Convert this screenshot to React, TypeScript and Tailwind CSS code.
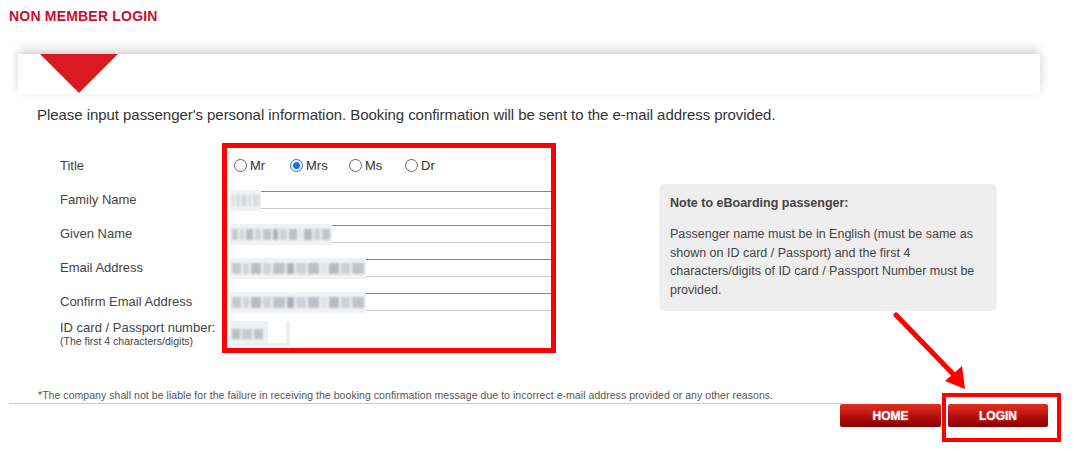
import React from "react";

function Blur({ w }: { w: string }) {
  return (
    <div className={`absolute left-0 top-[-2px] h-[21px] ${w} overflow-hidden bg-[#f1f2f3]`}>
      <div className="flex h-full items-center gap-[2px] px-[2px] blur-[1.3px]">
        <span className="h-[11px] w-[10px] bg-[#c6c9cd]" />
        <span className="h-[11px] w-[7px] bg-[#d3d6d9]" />
        <span className="h-[11px] w-[12px] bg-[#b9bdc2]" />
        <span className="h-[11px] w-[9px] bg-[#d0d3d6]" />
        <span className="h-[11px] w-[14px] bg-[#bfc3c7]" />
        <span className="h-[11px] w-[8px] bg-[#aeb2b7]" />
        <span className="h-[11px] w-[11px] bg-[#cfd2d5]" />
        <span className="h-[11px] w-[13px] bg-[#bcc0c4]" />
        <span className="h-[11px] w-[6px] bg-[#e2e4e6]" />
        <span className="h-[11px] w-[12px] bg-[#b7bbc0]" />
        <span className="h-[11px] w-[10px] bg-[#ccd0d3]" />
        <span className="h-[11px] w-[14px] bg-[#c0c4c8]" />
      </div>
    </div>
  );
}

function Field({ w }: { w: string }) {
  return (
    <div className="flex h-[34px] items-center pl-[3px]">
      <div className="relative h-[18px] w-full border-t border-b border-t-[#7d8894] border-b-[#c5cacf]">
        <Blur w={w} />
      </div>
    </div>
  );
}

function Radio({ label, checked, w }: { label: string; checked?: boolean; w: string }) {
  return (
    <label className={`flex items-center gap-[3px] ${w}`}>
      {checked ? (
        <span className="flex h-[13px] w-[13px] items-center justify-center rounded-full border border-[#1a73e8]">
          <span className="h-[7px] w-[7px] rounded-full bg-[#1a73e8]" />
        </span>
      ) : (
        <span className="h-[13px] w-[13px] rounded-full border border-[#666]" />
      )}
      <span className="text-[13px] text-[#333]">{label}</span>
    </label>
  );
}

export default function App() {
  return (
    <div className="relative h-[455px] w-[1079px] overflow-hidden bg-white font-['Liberation_Sans',Arial,sans-serif]">
      <h1 className="pl-[9px] pt-[8px] text-[14px] font-bold leading-[17px] tracking-[0.2px] text-[#c8102e]">
        NON MEMBER LOGIN
      </h1>

      {/* card header strip */}
      <div className="ml-[18px] mt-[29px] h-[40px] w-[1022px] bg-white shadow-[0_-6px_9px_rgba(0,0,0,0.12),4px_0_6px_rgba(0,0,0,0.04),-4px_0_6px_rgba(0,0,0,0.04)]">
        <svg width="80" height="40" className="ml-[22px]">
          <polygon points="0,0 78,0 39,39" fill="#da1a23" />
        </svg>
      </div>

      <p className="ml-[37px] mt-[12px] text-[15px] leading-[18px] tracking-[-0.05px] text-[#333]">
        Please input passenger's personal information. Booking confirmation will be sent to the e-mail address provided.
      </p>

      <div className="mt-[19px] flex">
        <div className="w-[162px] ml-[60px] pt-[5px] text-[13px] text-[#444]">
          <div className="flex h-[35px] items-center">Title</div>
          <div className="flex h-[34px] items-center">Family Name</div>
          <div className="flex h-[34px] items-center">Given Name</div>
          <div className="flex h-[34px] items-center">Email Address</div>
          <div className="flex h-[34px] items-center">Confirm Email Address</div>
          <div className="flex h-[29px] flex-col justify-center leading-[14px]">
            <span>ID card / Passport number:</span>
            <span className="text-[10.5px] leading-[12px]">(The first 4 characters/digits)</span>
          </div>
        </div>

        <div className="w-[334px] border-[5px] border-[#ff0000]">
          <div className="flex h-[35px] items-center pl-[7px]">
            <Radio label="Mr" w="w-[56px]" />
            <Radio label="Mrs" checked w="w-[59px]" />
            <Radio label="Ms" w="w-[56px]" />
            <Radio label="Dr" w="w-[40px]" />
          </div>
          <Field w="w-[31px]" />
          <Field w="w-[102px]" />
          <Field w="w-[136px]" />
          <Field w="w-[136px]" />
          <div className="flex h-[29px] items-center pl-[3px]">
            <div className="relative h-[25px] w-[60px] bg-white">
              <div className="absolute left-0 top-0 h-[25px] w-[38px] bg-[#eef0f1]">
                <div className="flex h-full items-center gap-[2px] px-[2px] blur-[1.3px]">
                  <span className="h-[10px] w-[8px] bg-[#b9bdc1]" />
                  <span className="h-[10px] w-[10px] bg-[#c8cbcf]" />
                  <span className="h-[10px] w-[9px] bg-[#bdc1c5]" />
                </div>
              </div>
              <div className="absolute right-0 top-0 h-[25px] w-[4px] bg-[#eef0f1]" />
              <div className="absolute bottom-0 left-0 h-[3px] w-[60px] bg-[#eef0f1]" />
            </div>
          </div>
        </div>

        <div className="ml-[103px] mt-[41px] h-[127px] w-[338px] rounded-[6px] bg-[#eeeeee] px-[11px] pt-[11px] text-[12.5px] text-[#444]">
          <p className="font-bold leading-[16px]">Note to eBoarding passenger:</p>
          <p className="mt-[14px] leading-[18.5px]">
            Passenger name must be in English (must be same as shown on ID card / Passport) and the first 4 characters/digits of ID card / Passport Number must be provided.
          </p>
        </div>
      </div>

      <div className="ml-[9px] mt-[35px] h-[16px] w-[833px] whitespace-nowrap border-b border-[#ebbcbc] pl-[29px] text-[10.5px] leading-[14px] tracking-[0.05px] text-[#555]">
        *The company shall not be liable for the failure in receiving the booking confirmation message due to incorrect e-mail address provided or any other reasons.
      </div>

      <div className="flex justify-end gap-[7px] pr-[31px]">
        <button className="h-[23px] w-[101px] rounded-[2px] bg-gradient-to-b from-[#e0301e] via-[#b81010] to-[#8c0000] text-[12px] font-bold text-white [text-shadow:0_0_2px_rgba(255,255,255,0.6)]">
          HOME
        </button>
        <button className="h-[23px] w-[100px] rounded-[2px] bg-gradient-to-b from-[#e0301e] via-[#b81010] to-[#8c0000] text-[12px] font-bold text-white [text-shadow:0_0_2px_rgba(255,255,255,0.6)]">
          LOGIN
        </button>
      </div>

      {/* annotations */}
      <div className="absolute left-[942px] top-[393px] h-[49px] w-[119px] border-[4px] border-[#ff0000]" />
      <svg className="absolute left-0 top-0" width="1079" height="455">
        <line x1="896" y1="315" x2="956" y2="377" stroke="#ff0000" strokeWidth="5" strokeLinecap="round" />
        <polygon points="965,389 945,381 962,366" fill="#ff0000" />
      </svg>
    </div>
  );
}
